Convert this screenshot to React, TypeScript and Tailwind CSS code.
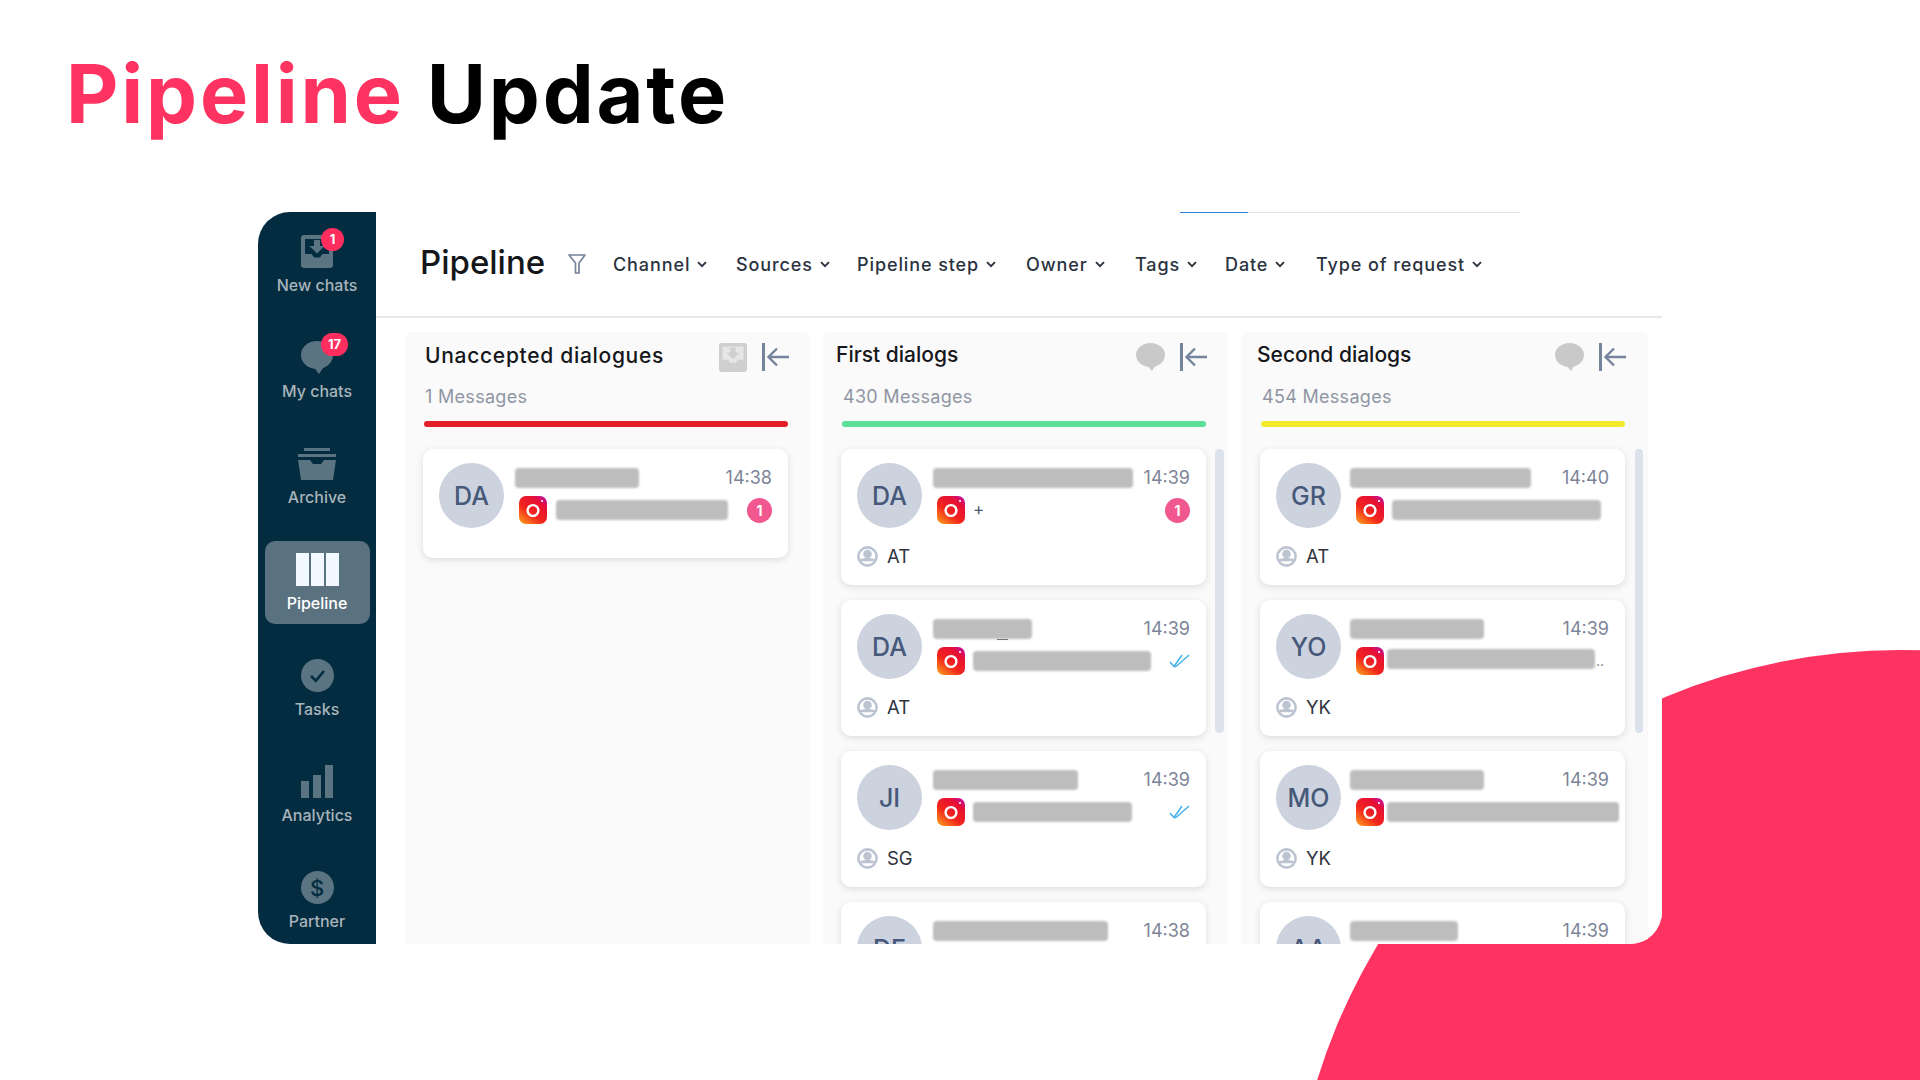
import React from "react";

const font = { fontFamily: '"Inter", "Liberation Sans", sans-serif' };

function Insta() {
  return (
    <svg width="28" height="28" viewBox="0 0 28 28" className="shrink-0">
      <defs>
        <linearGradient id="ig" x1="0.05" y1="1" x2="0.85" y2="0">
          <stop offset="0" stopColor="#fda01c" />
          <stop offset="0.42" stopColor="#f2261c" />
          <stop offset="0.8" stopColor="#e60f35" />
          <stop offset="1" stopColor="#c5109a" />
        </linearGradient>
      </defs>
      <rect x="0" y="0" width="28" height="28" rx="7" fill="url(#ig)" />
      <circle cx="14" cy="14.500" r="5.400" fill="none" stroke="#fff" strokeWidth="2.400" />
      <circle cx="23" cy="5" r="1.100" fill="#fff" />
    </svg>
  );
}

function Person() {
  return (
    <svg width="21" height="21" viewBox="0 0 21 21" className="shrink-0">
      <circle cx="10.500" cy="10.500" r="9.100" fill="#fff" stroke="#bcc4d2" strokeWidth="2.600" />
      <circle cx="10.500" cy="8" r="4.300" fill="#bcc4d2" />
      <path d="M3 13.500c2.400-2 12.600-2 15 0v1.800H3z" fill="#bcc4d2" />
    </svg>
  );
}

function Checks() {
  return (
    <svg width="21" height="14" viewBox="0 0 21 14" fill="none" stroke="#45b1ea" strokeWidth="1.500" className="shrink-0">
      <path d="M1 8l4 4.500L13 1" />
      <path d="M7 12.500L20 1" />
      <path d="M5.500 12.500h1.500" />
    </svg>
  );
}

function Chevron() {
  return (
    <svg width="10" height="7" viewBox="0 0 10 7" fill="none" stroke="#2b3340" strokeWidth="1.900">
      <path d="M1 1.200l4 4 4-4" />
    </svg>
  );
}

function ArrowBar() {
  return (
    <svg width="27" height="28" viewBox="0 0 27 28" fill="none" stroke="#76839c" className="shrink-0">
      <path d="M1.500 0v28" strokeWidth="3" />
      <path d="M27 14H7" strokeWidth="2.400" />
      <path d="M15 5.500L6.500 14l8.500 8.500" strokeWidth="2.400" />
    </svg>
  );
}

function Bubble() {
  return (
    <svg width="29" height="28" viewBox="0 0 29 28" className="shrink-0">
      <ellipse cx="14.500" cy="12" rx="14.500" ry="12" fill="#c9c9c9" />
      <path d="M10 21l6 7 5-8z" fill="#c9c9c9" />
    </svg>
  );
}

function TrayIn({ fill, hole, w = 32, h = 33 }: { fill: string; hole: string; w?: number; h?: number }) {
  return (
    <svg width={w} height={h} viewBox="0 0 32 33" className="shrink-0">
      <rect width="32" height="33" rx="3" fill={fill} />
      <path d="M4 4h24v15h-6.500l-2.500 3.500h-6L10.500 19H4z" fill={hole} />
      <path d="M13 5h6v6h4.500L16 18.500 8.500 11H13z" fill={fill} />
    </svg>
  );
}

const sideColor = "#5a7482";

function SideIcon({ name }: { name: string }) {
  if (name === "New chats") return <TrayIn fill={sideColor} hole="#042c40" />;
  if (name === "My chats")
    return (
      <svg width="32" height="33" viewBox="0 0 32 33">
        <ellipse cx="16" cy="14" rx="16" ry="14" fill={sideColor} />
        <path d="M12 25l6 8 6-9z" fill={sideColor} />
      </svg>
    );
  if (name === "Archive")
    return (
      <svg width="38" height="32" viewBox="0 0 38 32" fill={sideColor}>
        <rect x="6" y="0" width="26" height="3" />
        <rect x="0" y="6" width="38" height="3" />
        <path d="M0 12h12l3 4h8l3-4h12l-3 20H3z" />
      </svg>
    );
  if (name === "Pipeline")
    return (
      <svg width="43" height="33" viewBox="0 0 43 33" fill="#f1f8ff">
        <rect x="0" width="13" height="33" />
        <rect x="15" width="13" height="33" />
        <rect x="30" width="13" height="33" />
      </svg>
    );
  if (name === "Tasks")
    return (
      <svg width="33" height="33" viewBox="0 0 33 33">
        <circle cx="16.500" cy="16.500" r="16.500" fill={sideColor} />
        <path d="M10 17l4.800 4.800L23 12" fill="none" stroke="#042c40" strokeWidth="2.600" />
      </svg>
    );
  if (name === "Analytics")
    return (
      <svg width="33" height="33" viewBox="0 0 33 33" fill={sideColor}>
        <rect x="0" y="16" width="8" height="17" />
        <rect x="12" y="10" width="8" height="23" />
        <rect x="24" y="0" width="8" height="33" />
      </svg>
    );
  return (
    <div className="w-[33px] h-[33px] rounded-full bg-[#5a7482] flex items-center justify-center text-[22px] leading-none font-medium text-[#042c40]">
      $
    </div>
  );
}

const sideItems = ["New chats", "My chats", "Archive", "Pipeline", "Tasks", "Analytics", "Partner"];

function Sidebar() {
  return (
    <div className="w-[118px] shrink-0 bg-[#042c40] flex flex-col">
      {sideItems.map((n) => {
        const active = n === "Pipeline";
        return (
          <div key={n} className="h-[106px] shrink-0 flex justify-center pt-[11px]">
            <div
              className={
                active
                  ? "w-[105px] h-[83px] rounded-[10px] bg-[#5a7280] pt-[12px] flex flex-col items-center"
                  : "w-[105px] h-[83px] pt-[12px] flex flex-col items-center"
              }
            >
              <div className="relative h-[33px] flex items-center justify-center">
                <SideIcon name={n} />
                {n === "New chats" && (
                  <span className="absolute left-[20px] top-[-7px] w-[23px] h-[23px] rounded-full bg-[#ff2e5f] text-white text-[13px] font-bold flex items-center justify-center">
                    1
                  </span>
                )}
                {n === "My chats" && (
                  <span className="absolute left-[20px] top-[-8px] w-[27px] h-[23px] rounded-full bg-[#ff2e5f] text-white text-[13px] font-bold flex items-center justify-center">
                    17
                  </span>
                )}
              </div>
              <div
                className={
                  active
                    ? "mt-[7px] h-[20px] leading-[20px] text-[16px] font-medium text-white whitespace-nowrap"
                    : "mt-[7px] h-[20px] leading-[20px] text-[16px] font-medium text-[#a7b4bb] whitespace-nowrap"
                }
              >
                {n}
              </div>
            </div>
          </div>
        );
      })}
    </div>
  );
}

const filters: [string, string][] = [
  ["Channel", "w-[123px]"],
  ["Sources", "w-[121px]"],
  ["Pipeline step", "w-[169px]"],
  ["Owner", "w-[109px]"],
  ["Tags", "w-[90px]"],
  ["Date", "w-[91px]"],
  ["Type of request", "w-[172px]"],
];

function Header() {
  return (
    <div className="relative h-[106px] shrink-0 border-b-2 border-[#e6e8ec] flex items-center pl-[44px]">
      <div className="absolute left-[804px] top-0 w-[340px] h-px bg-[#e3e5e9]" />
      <div className="absolute left-[804px] top-0 w-[68px] h-px bg-[#2a80d8]" />
      <div className="text-[33px] leading-none font-medium text-[#14161a] w-[148px] shrink-0 pb-[3px]">Pipeline</div>
      <svg width="18" height="20" viewBox="0 0 18 20" fill="none" stroke="#76839c" strokeWidth="1.700" className="shrink-0">
        <path d="M1 1h16l-6 8v10H7.500V9z" strokeLinejoin="round" />
      </svg>
      <div className="flex ml-[27px] pt-[1px]">
        {filters.map(([f, w]) => (
          <div key={f} className={"flex items-center gap-[7px] shrink-0 " + w}>
            <span className="text-[18px] font-medium text-[#2b3340] tracking-[0.9px] whitespace-nowrap">{f}</span>
            <Chevron />
          </div>
        ))}
      </div>
    </div>
  );
}

type Card = {
  ini: string;
  name: number;
  time: string;
  msg?: number;
  msgGap?: number;
  plus?: boolean;
  badge?: boolean;
  check?: boolean;
  owner?: string;
  extra?: string;
  under?: boolean;
};

function BlurBar({ w }: { w: number }) {
  return <div className="h-[20px] rounded-[4px] bg-[#bdbdbd] blur-[1px] shrink-0" style={{ width: w }} />;
}

function CardView({ c, tight }: { c: Card; tight?: boolean }) {
  return (
    <div className="w-[365px] shrink-0 rounded-[10px] bg-white shadow-[0_2px_7px_rgba(30,40,60,0.14)] pt-[14px] pl-[16px] pr-[16px]">
      <div className="flex">
        <div className="w-[65px] h-[65px] rounded-full bg-[#ccd2de] flex items-center justify-center pt-[2px] text-[25px] font-medium text-[#46597a] shrink-0">
          {c.ini}
        </div>
        <div className={tight ? "flex-1 ml-[9px] min-w-0" : "flex-1 ml-[11px] min-w-0"}>
          <div className="relative flex items-center justify-between h-[30px]">
            <BlurBar w={c.name} />
            {c.under && <div className="absolute left-[64px] top-[25px] w-[11px] h-px bg-[#777]" />}
            <span className="text-[18px] text-[#7c8497] leading-none">{c.time}</span>
          </div>
          <div className={tight ? "flex items-center h-[28px] mt-[3px] pl-[6px]" : "flex items-center h-[28px] mt-[3px] pl-[4px]"}>
            <Insta />
            {c.plus && <span className="ml-[8px] text-[17px] text-[#4c5a70]">+</span>}
            {c.msg && (
              <div className="flex" style={{ marginLeft: c.msgGap ?? 8 }}>
                <BlurBar w={c.msg} />
                {c.extra && <span className="text-[14px] text-[#777] leading-[24px] ml-[1px]">{c.extra}</span>}
              </div>
            )}
            <div className="ml-auto flex items-center">
              {c.badge && (
                <span className="w-[25px] h-[25px] rounded-full bg-[#f0588f] text-white text-[14px] font-bold flex items-center justify-center">
                  1
                </span>
              )}
              {c.check && <Checks />}
            </div>
          </div>
        </div>
      </div>
      {c.owner ? (
        <div className="flex items-center h-[21px] mt-[18px] mb-[18px]">
          <Person />
          <span className="ml-[9px] text-[18.500px] text-[#2f3440]">{c.owner}</span>
        </div>
      ) : (
        <div className="h-[30px]" />
      )}
    </div>
  );
}

function Column({
  cls,
  titleCls,
  msgCls,
  title,
  count,
  color,
  icon,
  cards,
  scroll,
  tight,
}: {
  cls: string;
  titleCls: string;
  msgCls: string;
  title: string;
  count: string;
  color: string;
  icon: React.ReactNode;
  cards: Card[];
  scroll: string;
  tight?: boolean;
}) {
  return (
    <div className={"relative shrink-0 bg-[#fafafa] rounded-t-[6px] overflow-hidden " + cls}>
      <div className="flex items-center h-[28px] mt-[11px] w-[366px]">
        <div className={"text-[21px] font-medium text-[#15171b] whitespace-nowrap flex-1 " + titleCls}>{title}</div>
        {icon}
        <ArrowBar />
      </div>
      <div className={"h-[24px] leading-[24px] mt-[14px] text-[18px] tracking-[0.3px] text-[#8f95a3] " + msgCls}>{count}</div>
      <div className={"w-[364px] ml-[1px] h-[6px] rounded-full mt-[12px] " + color} />
      <div className="mt-[22px] flex flex-col gap-[15px]">
        {cards.map((c, i) => (
          <CardView key={i} c={c} tight={tight} />
        ))}
      </div>
      {scroll && <div className={"absolute top-[117px] h-[284px] rounded-full bg-[#dbe2ec] " + scroll} />}
    </div>
  );
}

const col1: Card[] = [{ ini: "DA", name: 124, time: "14:38", msg: 172, msgGap: 9, badge: true }];
const col2: Card[] = [
  { ini: "DA", name: 200, time: "14:39", plus: true, badge: true, owner: "AT" },
  { ini: "DA", name: 99, time: "14:39", msg: 178, check: true, owner: "AT", under: true },
  { ini: "JI", name: 145, time: "14:39", msg: 159, check: true, owner: "SG" },
  { ini: "DE", name: 175, time: "14:38", msg: 150, owner: "AT" },
];
const col3: Card[] = [
  { ini: "GR", name: 181, time: "14:40", msg: 209, owner: "AT" },
  { ini: "YO", name: 134, time: "14:39", msg: 208, msgGap: 3, extra: "..", owner: "YK" },
  { ini: "MO", name: 134, time: "14:39", msg: 232, msgGap: 3, owner: "YK" },
  { ini: "AA", name: 108, time: "14:39", msg: 150, owner: "YK" },
];

export default function App() {
  return (
    <div className="relative w-[1920px] h-[1080px] overflow-hidden bg-white" style={font}>
      <div className="absolute left-[1290px] top-[650px] w-[1220px] h-[1220px] rounded-full bg-[#fe3361]" />
      <div className="relative h-[212px] pl-[66px] pt-[42px]">
        <h1 className="text-[81px] leading-[104px] font-bold tracking-[2.800px] text-black whitespace-nowrap">
          <span className="text-[#fe3361]">Pipeline</span> Update
        </h1>
      </div>
      <div className="relative ml-[258px] w-[1404px] h-[732px] rounded-[32px] overflow-hidden bg-white flex">
        <Sidebar />
        <div className="flex-1 flex flex-col min-w-0">
          <Header />
          <div className="flex pt-[14px] pl-[29px] gap-[13px] overflow-hidden flex-1">
            <Column
              cls="w-[405px] pl-[18px]"
              titleCls="ml-[2px] pb-[2px] tracking-[0.7px]"
              msgCls="ml-[2px]"
              title="Unaccepted dialogues"
              count="1 Messages"
              color="bg-[#e3202a]"
              icon={<div className="mr-[15px]"><TrayIn fill="#cfcfcf" hole="#e6e6e6" w={28} h={29} /></div>}
              cards={col1}
              scroll=""
            />
            <Column
              cls="w-[405px] pl-[18px]"
              titleCls="ml-[-5px] pb-[5px]"
              msgCls="ml-[2px]"
              title="First dialogs"
              count="430 Messages"
              color="bg-[#5cde99]"
              icon={<div className="mr-[15px]"><Bubble /></div>}
              cards={col2}
              scroll="left-[392px] w-[9px]"
            />
            <Column
              cls="w-[407px] pl-[19px]"
              titleCls="ml-[-3px] pb-[5px]"
              msgCls="ml-[2px]"
              title="Second dialogs"
              count="454 Messages"
              color="bg-[#f2ea2d]"
              icon={<div className="mr-[15px]"><Bubble /></div>}
              cards={col3}
              scroll="left-[394px] w-[8px]"
              tight
            />
            <div className="flex-1 bg-[#fbfbfb]" />
          </div>
        </div>
      </div>
    </div>
  );
}
